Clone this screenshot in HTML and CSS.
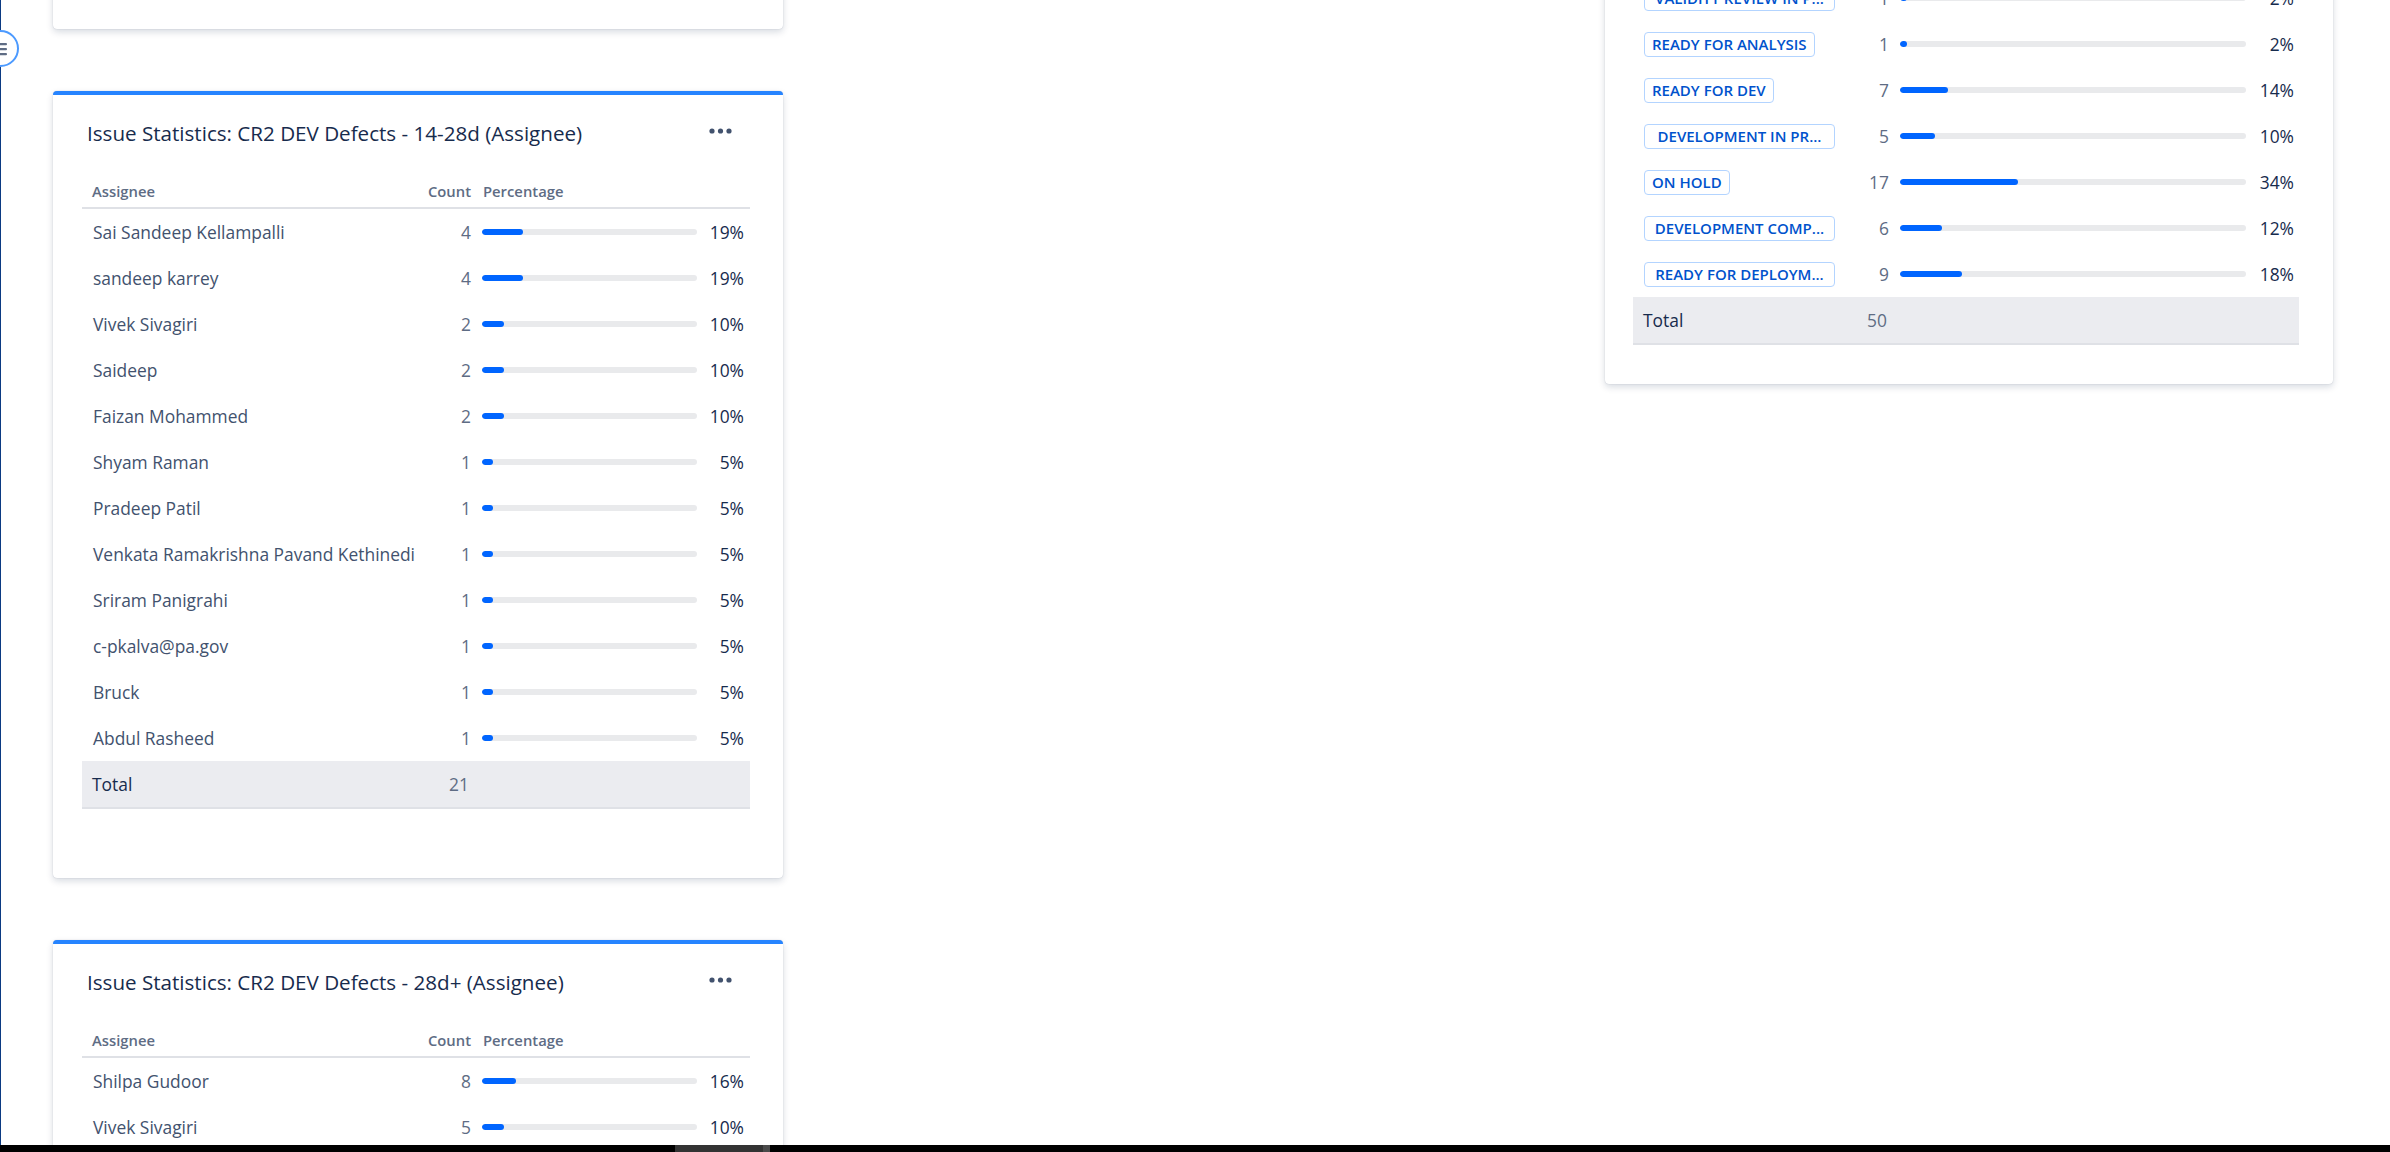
FILE: index.html
```html
<!DOCTYPE html>
<html lang="en">
<head>
<meta charset="utf-8">
<title>Dashboard</title>
<link rel="stylesheet" href="styles.css">
</head>
<body>
<div class="screen">
  <div class="workspace">
    <div class="sidebar-edge"></div>
    <button class="sidebar-toggle" aria-label="Toggle sidebar">
      <svg width="12" height="16" viewBox="0 0 12 16"><rect x="0" y="2" width="10" height="2.2" rx="1" fill="#5e6c84"/><rect x="0" y="7" width="10" height="2.2" rx="1" fill="#5e6c84"/><rect x="0" y="12" width="10" height="2.2" rx="1" fill="#5e6c84"/></svg>
    </button>
    <main class="dashboard">
      <section class="column">
        <div class="gadget gadget--stub"></div>

        <div class="gadget gadget--accent">
          <header class="gadget-header">
            <h2 class="gadget-title">Issue Statistics: CR2 DEV Defects - 14-28d (Assignee)</h2>
            <span class="gadget-menu"><svg width="24" height="6" viewBox="0 0 24 6"><circle cx="3" cy="3" r="2.6" fill="#42526e"/><circle cx="11.5" cy="3" r="2.6" fill="#42526e"/><circle cx="20" cy="3" r="2.6" fill="#42526e"/></svg></span>
          </header>
          <div class="stats stats--assignee">
            <div class="stats-head"><span>Assignee</span><span class="num">Count</span><span>Percentage</span><span></span></div>
            <div class="stats-row"><span class="label">Sai Sandeep Kellampalli</span><span class="num">4</span><span class="track"><span class="fill" style="width:19%"></span></span><span class="pct">19%</span></div>
            <div class="stats-row"><span class="label">sandeep karrey</span><span class="num">4</span><span class="track"><span class="fill" style="width:19%"></span></span><span class="pct">19%</span></div>
            <div class="stats-row"><span class="label">Vivek Sivagiri</span><span class="num">2</span><span class="track"><span class="fill" style="width:10%"></span></span><span class="pct">10%</span></div>
            <div class="stats-row"><span class="label">Saideep</span><span class="num">2</span><span class="track"><span class="fill" style="width:10%"></span></span><span class="pct">10%</span></div>
            <div class="stats-row"><span class="label">Faizan Mohammed</span><span class="num">2</span><span class="track"><span class="fill" style="width:10%"></span></span><span class="pct">10%</span></div>
            <div class="stats-row"><span class="label">Shyam Raman</span><span class="num">1</span><span class="track"><span class="fill" style="width:5%"></span></span><span class="pct">5%</span></div>
            <div class="stats-row"><span class="label">Pradeep Patil</span><span class="num">1</span><span class="track"><span class="fill" style="width:5%"></span></span><span class="pct">5%</span></div>
            <div class="stats-row"><span class="label">Venkata Ramakrishna Pavand Kethinedi</span><span class="num">1</span><span class="track"><span class="fill" style="width:5%"></span></span><span class="pct">5%</span></div>
            <div class="stats-row"><span class="label">Sriram Panigrahi</span><span class="num">1</span><span class="track"><span class="fill" style="width:5%"></span></span><span class="pct">5%</span></div>
            <div class="stats-row"><span class="label">c-pkalva@pa.gov</span><span class="num">1</span><span class="track"><span class="fill" style="width:5%"></span></span><span class="pct">5%</span></div>
            <div class="stats-row"><span class="label">Bruck</span><span class="num">1</span><span class="track"><span class="fill" style="width:5%"></span></span><span class="pct">5%</span></div>
            <div class="stats-row"><span class="label">Abdul Rasheed</span><span class="num">1</span><span class="track"><span class="fill" style="width:5%"></span></span><span class="pct">5%</span></div>
            <div class="stats-total"><span class="total-label">Total</span><span class="num">21</span><span></span><span></span></div>
          </div>
        </div>

        <div class="gadget gadget--accent">
          <header class="gadget-header">
            <h2 class="gadget-title">Issue Statistics: CR2 DEV Defects - 28d+ (Assignee)</h2>
            <span class="gadget-menu"><svg width="24" height="6" viewBox="0 0 24 6"><circle cx="3" cy="3" r="2.6" fill="#42526e"/><circle cx="11.5" cy="3" r="2.6" fill="#42526e"/><circle cx="20" cy="3" r="2.6" fill="#42526e"/></svg></span>
          </header>
          <div class="stats stats--assignee">
            <div class="stats-head"><span>Assignee</span><span class="num">Count</span><span>Percentage</span><span></span></div>
            <div class="stats-row"><span class="label">Shilpa Gudoor</span><span class="num">8</span><span class="track"><span class="fill" style="width:16%"></span></span><span class="pct">16%</span></div>
            <div class="stats-row"><span class="label">Vivek Sivagiri</span><span class="num">5</span><span class="track"><span class="fill" style="width:10%"></span></span><span class="pct">10%</span></div>
          </div>
        </div>
      </section>

      <section class="column"></section>

      <section class="column">
        <div class="gadget gadget--status">
          <div class="stats stats--status">
            <div class="stats-row"><span class="label"><span class="lozenge lozenge--trunc">VALIDITY REVIEW IN P...</span></span><span class="num">1</span><span class="track"><span class="fill" style="width:2%"></span></span><span class="pct">2%</span></div>
            <div class="stats-row"><span class="label"><span class="lozenge">READY FOR ANALYSIS</span></span><span class="num">1</span><span class="track"><span class="fill" style="width:2%"></span></span><span class="pct">2%</span></div>
            <div class="stats-row"><span class="label"><span class="lozenge">READY FOR DEV</span></span><span class="num">7</span><span class="track"><span class="fill" style="width:14%"></span></span><span class="pct">14%</span></div>
            <div class="stats-row"><span class="label"><span class="lozenge lozenge--trunc">DEVELOPMENT IN PR...</span></span><span class="num">5</span><span class="track"><span class="fill" style="width:10%"></span></span><span class="pct">10%</span></div>
            <div class="stats-row"><span class="label"><span class="lozenge">ON HOLD</span></span><span class="num">17</span><span class="track"><span class="fill" style="width:34%"></span></span><span class="pct">34%</span></div>
            <div class="stats-row"><span class="label"><span class="lozenge lozenge--trunc">DEVELOPMENT COMP...</span></span><span class="num">6</span><span class="track"><span class="fill" style="width:12%"></span></span><span class="pct">12%</span></div>
            <div class="stats-row"><span class="label"><span class="lozenge lozenge--trunc">READY FOR DEPLOYM...</span></span><span class="num">9</span><span class="track"><span class="fill" style="width:18%"></span></span><span class="pct">18%</span></div>
            <div class="stats-total"><span class="total-label">Total</span><span class="num">50</span><span></span><span></span></div>
          </div>
        </div>
      </section>
    </main>
  </div>
  <div class="taskbar"><span class="taskbar-gap"></span><span class="taskbar-item"></span><span class="taskbar-sep"></span></div>
</div>
</body>
</html>
```
FILE: styles.css
```css
* { box-sizing: border-box; }
html, body { margin: 0; padding: 0; background: #fff; }
body {
  font-family: "Open Sans", "Noto Sans", "Liberation Sans", sans-serif;
  color: #172b4d;
  width: 2390px;
  height: 1152px;
  overflow: hidden;
}
.screen { display: flex; flex-direction: column; height: 1152px; }
.workspace { position: relative; flex: 1; display: flex; overflow: hidden; }
.sidebar-edge { width: 1px; flex: none; background: #0b3a82; }
.sidebar-toggle {
  position: absolute; left: -18px; top: 30px;
  width: 37px; height: 37px; border-radius: 50%;
  border: 2px solid #4c9aff; background: #fff; padding: 0;
  display: flex; align-items: center; justify-content: flex-end; padding-right: 9px;
  z-index: 2;
}
.sidebar-toggle svg { margin-right: -1px; }
.dashboard {
  flex: 1;
  margin-top: -25px;
  padding-left: 52px;
  display: grid;
  grid-template-columns: 730px 730px 730px;
  column-gap: 46px;
  align-items: start;
}
.column { display: flex; flex-direction: column; gap: 62px; }
.gadget {
  background: #fff;
  border-radius: 4px;
  box-shadow: 0 3px 7px rgba(9, 30, 66, 0.16), 0 0 1px rgba(9, 30, 66, 0.28);
}
.gadget--stub { height: 54px; }
.gadget--accent { border-top: 4px solid #2684ff; padding: 0 33px 69px 29px; }
.gadget--status { width: 728px; padding: 0 34px 39px 28px; }
.gadget-header {
  display: flex; align-items: center; justify-content: space-between;
  padding: 26px 17px 0 5px;
  height: 50px;
}
.gadget-title { margin: 0; font-size: 20.6px; font-weight: 500; line-height: 24px; color: #172b4d; }
.gadget-menu { display: flex; margin-top: -5px; }
.stats { margin-top: 32px; }
.stats--status { margin-top: 0; }
.stats--assignee .stats-head, .stats--assignee .stats-row, .stats--assignee .stats-total {
  grid-template-columns: 1fr 62px 215px 53px;
}
.stats--status .stats-row, .stats--status .stats-total {
  grid-template-columns: 1fr 62px 346px 53px;
}
.stats-head {
  display: grid; align-items: center; height: 32px;
  border-bottom: 2px solid #dfe1e6;
  padding-bottom: 2px;
  font-size: 14.8px; font-weight: 600; color: #5e6c84;
}
.stats-head > span:first-child { padding-left: 10px; }
.stats-head .num { padding-right: 11px; text-align: right; }
.stats-head > span:nth-child(3) { padding-left: 1px; }
.stats-row {
  display: grid; align-items: center; height: 46px;
  font-size: 17.4px;
}
.label { padding-left: 11px; color: #42526e; white-space: nowrap; }
.num { text-align: right; padding-right: 11px; color: #5e6c84; }
.pct { text-align: right; padding-right: 6px; color: #172b4d; }
.stats--status .pct { padding-right: 5px; }
.track { display: block; height: 6px; border-radius: 3px; background: #e9eaec; overflow: hidden; }
.fill { display: block; height: 6px; border-radius: 3px; background: #0065ff; min-width: 6px; }
.stats-total {
  display: grid; align-items: center; height: 48px;
  background: #ebecf0; border-bottom: 2px solid #dfe1e6;
  font-size: 17.4px;
}
.total-label { padding-left: 10px; color: #172b4d; }
.stats-total .num { padding-right: 13px; }
.lozenge {
  display: inline-block; height: 25px; line-height: 23px;
  padding: 0 7px; border: 1px solid #b3d4ff; border-radius: 4px;
  font-size: 15px; font-weight: 600; color: #0052cc; background: #fff;
  white-space: nowrap; vertical-align: middle;
}
.lozenge--trunc { width: 191px; text-align: center; overflow: hidden; }
.taskbar { height: 7px; flex: none; background: #000; display: flex; }
.taskbar-gap { width: 675px; }
.taskbar-item { width: 88px; background: #333; }
.taskbar-sep { width: 7px; background: #4a4a4a; }
```
